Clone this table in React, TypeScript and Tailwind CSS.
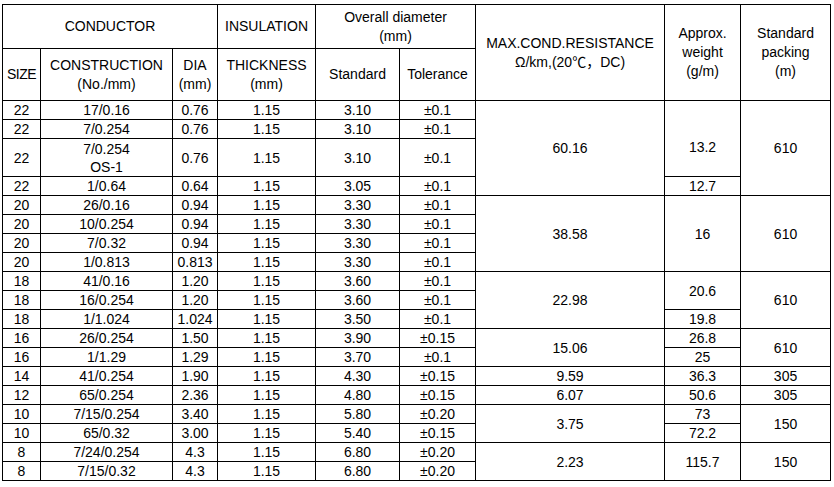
type Cell = { t: string; rs?: number; cls?: string };

const base: string[][] = [
  ["22", "17/0.16", "0.76", "1.15", "3.10", "±0.1"],
  ["22", "7/0.254", "0.76", "1.15", "3.10", "±0.1"],
  ["22", "7/0.254\nOS-1", "0.76", "1.15", "3.10", "±0.1"],
  ["22", "1/0.64", "0.64", "1.15", "3.05", "±0.1"],
  ["20", "26/0.16", "0.94", "1.15", "3.30", "±0.1"],
  ["20", "10/0.254", "0.94", "1.15", "3.30", "±0.1"],
  ["20", "7/0.32", "0.94", "1.15", "3.30", "±0.1"],
  ["20", "1/0.813", "0.813", "1.15", "3.30", "±0.1"],
  ["18", "41/0.16", "1.20", "1.15", "3.60", "±0.1"],
  ["18", "16/0.254", "1.20", "1.15", "3.60", "±0.1"],
  ["18", "1/1.024", "1.024", "1.15", "3.50", "±0.1"],
  ["16", "26/0.254", "1.50", "1.15", "3.90", "±0.15"],
  ["16", "1/1.29", "1.29", "1.15", "3.70", "±0.1"],
  ["14", "41/0.254", "1.90", "1.15", "4.30", "±0.15"],
  ["12", "65/0.254", "2.36", "1.15", "4.80", "±0.15"],
  ["10", "7/15/0.254", "3.40", "1.15", "5.80", "±0.20"],
  ["10", "65/0.32", "3.00", "1.15", "5.40", "±0.15"],
  ["8", "7/24/0.254", "4.3", "1.15", "6.80", "±0.20"],
  ["8", "7/15/0.32", "4.3", "1.15", "6.80", "±0.20"],
];

// merged cells on the right side, by row index
const extra: Cell[][] = [
  [{ t: "60.16", rs: 4 }, { t: "13.2", rs: 3, cls: "pt-4" }, { t: "610", rs: 4 }],
  [],
  [],
  [{ t: "12.7" }],
  [{ t: "38.58", rs: 4 }, { t: "16", rs: 4 }, { t: "610", rs: 4 }],
  [],
  [],
  [],
  [{ t: "22.98", rs: 3 }, { t: "20.6", rs: 2 }, { t: "610", rs: 3 }],
  [],
  [{ t: "19.8" }],
  [{ t: "15.06", rs: 2 }, { t: "26.8" }, { t: "610", rs: 2 }],
  [{ t: "25" }],
  [{ t: "9.59" }, { t: "36.3" }, { t: "305" }],
  [{ t: "6.07" }, { t: "50.6" }, { t: "305" }],
  [{ t: "3.75", rs: 2 }, { t: "73" }, { t: "150", rs: 2 }],
  [{ t: "72.2" }],
  [{ t: "2.23", rs: 2 }, { t: "115.7", rs: 2 }, { t: "150", rs: 2 }],
  [],
];

const td = "border border-black p-0 text-center align-middle whitespace-pre-line";
const th = `${td} font-normal leading-[19px]`;

export default function App() {
  return (
    <div
      className="min-h-screen bg-white pl-[2px] pt-[4px] text-black"
      style={{ fontFamily: '"Liberation Sans", Arial, "Noto Sans CJK SC", sans-serif' }}
    >
      <table className="table-fixed border-collapse text-[14px] leading-[18px] w-[828px]">
        <colgroup>
          <col className="w-[38px]" />
          <col className="w-[132px]" />
          <col className="w-[45px]" />
          <col className="w-[98px]" />
          <col className="w-[84px]" />
          <col className="w-[76px]" />
          <col className="w-[189px]" />
          <col className="w-[76px]" />
          <col className="w-[90px]" />
        </colgroup>
        <thead>
          <tr className="h-[44px]">
            <th colSpan={3} className={th}>CONDUCTOR</th>
            <th className={th}>INSULATION</th>
            <th colSpan={2} className={`${th} pt-[1px]`}>{"Overall diameter\n(mm)"}</th>
            <th rowSpan={2} className={th}>{"MAX.COND.RESISTANCE\nΩ/km,(20℃，DC)"}</th>
            <th rowSpan={2} className={th}>{"Approx.\nweight\n(g/m)"}</th>
            <th rowSpan={2} className={th}>{"Standard\npacking\n(m)"}</th>
          </tr>
          <tr className="h-[52px]">
            <th className={`${th} tracking-[-0.5px]`}>SIZE</th>
            <th className={th}>{"CONSTRUCTION\n(No./mm)"}</th>
            <th className={th}>{"DIA\n(mm)"}</th>
            <th className={th}>{"THICKNESS\n(mm)"}</th>
            <th className={th}>Standard</th>
            <th className={th}>Tolerance</th>
          </tr>
        </thead>
        <tbody>
          {base.map((r, i) => (
            <tr key={i} className={i === 2 ? "h-[38px]" : "h-[19px]"}>
              {r.map((c, j) => (
                <td key={j} className={td}>{c}</td>
              ))}
              {extra[i].map((c, j) => (
                <td key={"e" + j} rowSpan={c.rs} className={`${td} ${c.cls ?? ""}`}>{c.t}</td>
              ))}
            </tr>
          ))}
        </tbody>
      </table>
    </div>
  );
}
